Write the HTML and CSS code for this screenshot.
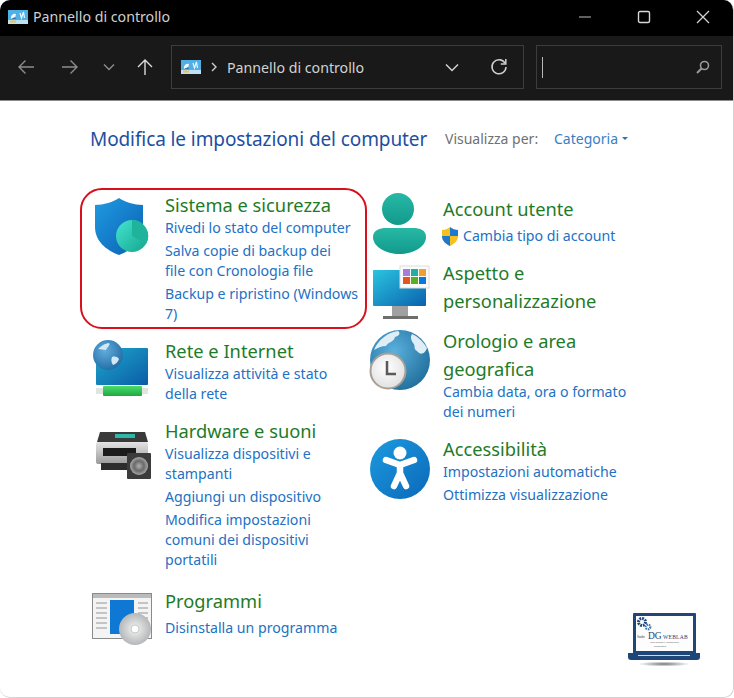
FILE: index.html
```html
<!DOCTYPE html>
<html lang="it">
<head>
<meta charset="utf-8">
<title>Pannello di controllo</title>
<link rel="stylesheet" href="styles.css">
</head>
<body>
<div class="window">
  <header class="titlebar">
    <div class="title-left">
      <svg class="cp-icon" viewBox="0 0 20 14"><rect width="20" height="14" fill="#4fb0e6"/><rect x="0" y="10" width="20" height="4" fill="#bfe0f2"/><path d="M3 9a4 4 0 0 1 5-5l-1 4z" fill="#f4f8fc"/><path d="M3 9h5l-1-2z" fill="#2f78b8"/><path d="M12 3l1.500 5 2-6 1 6" stroke="#eef7fc" fill="none" stroke-width="1.200"/><rect x="2" y="10.500" width="6" height="2" fill="#e8c458"/></svg>
      <span class="title-text">Pannello di controllo</span>
    </div>
    <div class="win-btns">
      <svg class="win-btn" viewBox="0 0 14 14"><path d="M1 7h12" stroke="#bdbdbd" stroke-width="1.2"/></svg>
      <svg class="win-btn" viewBox="0 0 14 14"><rect x="1.500" y="1.500" width="11" height="11" rx="1.500" fill="none" stroke="#d6d6d6" stroke-width="1.400"/></svg>
      <svg class="win-btn" viewBox="0 0 14 14"><path d="M1 1l12 12M13 1L1 13" stroke="#d6d6d6" stroke-width="1.2"/></svg>
    </div>
  </header>
  <nav class="toolbar">
    <div class="nav-btns">
      <svg class="nav-icon" viewBox="0 0 18 16"><path d="M17 8H2M8.500 1.500L2 8l6.500 6.500" fill="none" stroke="#8d8d8d" stroke-width="1.400"/></svg>
      <svg class="nav-icon" viewBox="0 0 18 16"><path d="M1 8h15M9.500 1.500L16 8l-6.500 6.500" fill="none" stroke="#8d8d8d" stroke-width="1.400"/></svg>
      <svg class="nav-chev" viewBox="0 0 12 8"><path d="M1 1.500l5 5 5-5" fill="none" stroke="#8d8d8d" stroke-width="1.400"/></svg>
      <svg class="nav-icon" viewBox="0 0 18 16"><path d="M9 16V1M2 8l7-7 7 7" fill="none" stroke="#dcdcdc" stroke-width="1.400"/></svg>
    </div>
    <div class="address">
      <svg class="cp-icon" viewBox="0 0 20 14"><rect width="20" height="14" fill="#4fb0e6"/><rect x="0" y="10" width="20" height="4" fill="#bfe0f2"/><path d="M3 9a4 4 0 0 1 5-5l-1 4z" fill="#f4f8fc"/><path d="M3 9h5l-1-2z" fill="#2f78b8"/><path d="M12 3l1.500 5 2-6 1 6" stroke="#eef7fc" fill="none" stroke-width="1.200"/><rect x="2" y="10.500" width="6" height="2" fill="#e8c458"/></svg>
      <svg class="crumb-sep" viewBox="0 0 6 10"><path d="M1 1l4 4-4 4" fill="none" stroke="#cfcfcf" stroke-width="1.400"/></svg>
      <span class="crumb">Pannello di controllo</span>
      <svg class="addr-chev" viewBox="0 0 14 9"><path d="M1 1.500l6 6 6-6" fill="none" stroke="#d4d4d4" stroke-width="1.500"/></svg>
      <svg class="refresh" viewBox="0 0 18 18"><path d="M15 5.200A7 7 0 1 0 16 9" fill="none" stroke="#cfcfcf" stroke-width="1.500"/><path d="M15.800 1v5h-5" fill="none" stroke="#cfcfcf" stroke-width="1.500"/></svg>
    </div>
    <div class="search">
      <span class="caret"></span>
      <svg class="search-icon" viewBox="0 0 14 14"><circle cx="8.500" cy="5.500" r="4" fill="none" stroke="#9a9a9a" stroke-width="1.600"/><path d="M5.500 8.500L1 13" stroke="#9a9a9a" stroke-width="2"/></svg>
    </div>
  </nav>
  <main class="content">
    <div class="head">
      <h1 class="heading">Modifica le impostazioni del computer</h1>
      <div class="view-by">
        <span class="view-label">Visualizza per:</span>
        <span class="view-value">Categoria</span>
        <span class="view-caret"></span>
      </div>
    </div>
    <div class="columns">
      <div class="col col-left">
        <section class="cat cat-marked">
          <svg class="icon" viewBox="0 0 64 64">
            <defs>
              <linearGradient id="sh" x1="0" y1="0" x2="1" y2="1"><stop offset="0" stop-color="#1f9be0"/><stop offset="1" stop-color="#0b5fb4"/></linearGradient>
              <linearGradient id="shc" x1="0" y1="0" x2="1" y2="1"><stop offset="0" stop-color="#45e4d0"/><stop offset="1" stop-color="#14a58c"/></linearGradient>
            </defs>
            <path d="M29 7C35 11 44 14 53 14V36C53 50 42 59 29 64C16 59 5 50 5 36V14C14 14 23 11 29 7Z" fill="url(#sh)"/>
            <circle cx="42" cy="45" r="16" fill="url(#shc)"/>
            <path d="M42 45V29A16 16 0 0 1 56 53Z" fill="#1fb39c"/>
          </svg>
          <div class="body">
            <h2 class="cat-title">Sistema e sicurezza</h2>
            <a class="link">Rivedi lo stato del computer</a>
            <a class="link">Salva copie di backup dei<br>file con Cronologia file</a>
            <a class="link">Backup e ripristino (Windows 7)</a>
          </div>
        </section>
        <section class="cat">
          <svg class="icon" viewBox="0 0 64 64">
            <defs>
              <linearGradient id="scr" x1="0" y1="0" x2="1" y2="1"><stop offset="0" stop-color="#1fa8cc"/><stop offset="1" stop-color="#0a5ca6"/></linearGradient>
              <radialGradient id="glb" cx=".4" cy=".35" r=".8"><stop offset="0" stop-color="#63acdc"/><stop offset="1" stop-color="#15639c"/></radialGradient>
              <linearGradient id="grn" x1="0" y1="0" x2="0" y2="1"><stop offset="0" stop-color="#4cdc68"/><stop offset="1" stop-color="#1ea844"/></linearGradient>
            </defs>
            <rect x="6" y="11" width="52" height="37" rx="1" fill="url(#scr)"/>
            <rect x="6" y="51" width="52" height="6" fill="#dfe6df"/>
            <rect x="13" y="49" width="39" height="10" rx="1" fill="url(#grn)"/>
            <circle cx="18" cy="18" r="15" fill="url(#glb)"/>
            <path d="M8 12c4-4 8-6 11-6 2 2-2 4-3 7-3 0-5-1-8-1zM22 20c3-1 6 0 7 2-1 3-3 5-6 6-2-3-2-5-1-8z" fill="#d4e8f4"/>
          </svg>
          <div class="body">
            <h2 class="cat-title">Rete e Internet</h2>
            <a class="link">Visualizza attività e stato della rete</a>
          </div>
        </section>
        <section class="cat">
          <svg class="icon" viewBox="0 0 64 64">
            <defs>
              <linearGradient id="prn" x1="0" y1="0" x2="0" y2="1"><stop offset="0" stop-color="#e4e4e4"/><stop offset="1" stop-color="#9a9a9a"/></linearGradient>
              <radialGradient id="lens"><stop offset="0" stop-color="#b0b0b0"/><stop offset=".55" stop-color="#6a6a6a"/><stop offset="1" stop-color="#a8a8a8"/></radialGradient>
            </defs>
            <path d="M10 15H55L58 25H7Z" fill="#3a3a3a"/>
            <rect x="25" y="17" width="20" height="4" fill="#2cb8a8"/>
            <rect x="6" y="25" width="52" height="22" rx="2" fill="url(#prn)"/>
            <rect x="13" y="31" width="33" height="8" fill="#1c1c1c"/>
            <rect x="11" y="46" width="30" height="7" fill="#2c2c2c"/>
            <rect x="37" y="36" width="24" height="26" rx="1" fill="#3c3c3c"/>
            <circle cx="49" cy="49" r="9" fill="url(#lens)"/>
          </svg>
          <div class="body">
            <h2 class="cat-title">Hardware e suoni</h2>
            <a class="link">Visualizza dispositivi e stampanti</a>
            <a class="link">Aggiungi un dispositivo</a>
            <a class="link">Modifica impostazioni comuni dei dispositivi portatili</a>
          </div>
        </section>
        <section class="cat cat-programs">
          <svg class="icon" viewBox="0 0 64 64">
            <defs>
              <radialGradient id="cd"><stop offset="0" stop-color="#f4f4f4"/><stop offset="1" stop-color="#b4b8b8"/></radialGradient>
            </defs>
            <rect x="2.500" y="6.500" width="59" height="45" fill="#f4f4f4" stroke="#8a8a8a"/>
            <rect x="3" y="7" width="58" height="4" fill="#bbbbbb"/>
            <path d="M6 16h11M6 21h11M6 26h11M6 31h11M6 36h11M6 41h11M48 16h10M48 21h10M48 26h10M48 31h10" stroke="#b4b4b4" stroke-width="1.500"/>
            <rect x="20" y="13" width="24" height="34" fill="#0f78d4"/>
            <circle cx="45" cy="42" r="16" fill="url(#cd)"/>
            <circle cx="45" cy="42" r="4" fill="#fff" stroke="#c8c8c8"/>
          </svg>
          <div class="body">
            <h2 class="cat-title title-loose">Programmi</h2>
            <a class="link">Disinstalla un programma</a>
          </div>
        </section>
      </div>
      <div class="col col-right">
        <section class="cat">
          <svg class="icon" viewBox="0 0 64 64">
            <defs><linearGradient id="pr" x1="0" y1="0" x2="0" y2="1"><stop offset="0" stop-color="#28b8a6"/><stop offset="1" stop-color="#119a8c"/></linearGradient></defs>
            <circle cx="30" cy="17" r="16" fill="url(#pr)"/>
            <path d="M5 45C5 38 12 36 18 36H45C52 36 58 38 58 45C58 55 45 62 31.500 62C18 62 5 55 5 45Z" fill="url(#pr)"/>
          </svg>
          <div class="body">
            <h2 class="cat-title title-loose">Account utente</h2>
            <a class="link link-uac">
              <svg class="uac" viewBox="0 0 18 20"><path d="M9 1C11 3 14 4 17 4V10C17 15 13 18 9 20C5 18 1 15 1 10V4C4 4 7 3 9 1Z" fill="#f4c21e"/><path d="M9 1C11 3 14 4 17 4V10H9ZM9 10V20C5 18 1 15 1 10Z" fill="#1f78d0"/></svg>
              <span>Cambia tipo di account</span>
            </a>
          </div>
        </section>
        <section class="cat">
          <svg class="icon" viewBox="0 0 64 64">
            <defs><linearGradient id="mon" x1="0" y1="0" x2="1" y2="1"><stop offset="0" stop-color="#2bc4e0"/><stop offset="1" stop-color="#0a62ae"/></linearGradient></defs>
            <rect x="5" y="14" width="53" height="36" rx="1" fill="url(#mon)"/>
            <rect x="24" y="50" width="16" height="10" fill="#a0a0a0"/>
            <rect x="15" y="60" width="35" height="3" fill="#6e6e6e"/>
            <rect x="32" y="10" width="29" height="22" fill="#fbfbfb" stroke="#dddddd"/>
            <rect x="35" y="13" width="7" height="7" fill="#a47fd8"/>
            <rect x="43" y="13" width="7" height="7" fill="#20b0a0"/>
            <rect x="51" y="13" width="7" height="7" fill="#f0a030"/>
            <rect x="35" y="21" width="7" height="7" fill="#e8541e"/>
            <rect x="43" y="21" width="7" height="7" fill="#58b020"/>
            <rect x="51" y="21" width="7" height="7" fill="#0a78d8"/>
          </svg>
          <div class="body">
            <h2 class="cat-title title-flush">Aspetto e personalizzazione</h2>
          </div>
        </section>
        <section class="cat cat-tight">
          <svg class="icon" viewBox="0 0 64 64">
            <defs>
              <radialGradient id="gl2" cx=".4" cy=".35" r=".85"><stop offset="0" stop-color="#5ab0dc"/><stop offset="1" stop-color="#14608e"/></radialGradient>
              <radialGradient id="clk" cx=".45" cy=".4" r=".7"><stop offset="0" stop-color="#ffffff"/><stop offset="1" stop-color="#dcdcdc"/></radialGradient>
            </defs>
            <circle cx="32" cy="36" r="30" fill="url(#gl2)"/>
            <path d="M6 26c4-10 14-18 24-19 3 2 1 5-3 6-1 5-7 5-9 9-5 0-8 2-12 4zM44 10c5 2 11 7 15 14-3 8-8 6-10 3-4-2-1-5-4-8-2-3-3-6-1-9z" fill="#dfeef6"/>
            <circle cx="20" cy="47" r="17.500" fill="url(#clk)" stroke="#a89e96" stroke-width="2"/>
            <path d="M19 37V50H28" fill="none" stroke="#5a5a5a" stroke-width="2.500"/>
          </svg>
          <div class="body">
            <h2 class="cat-title">Orologio e area geografica</h2>
            <a class="link">Cambia data, ora o formato dei numeri</a>
          </div>
        </section>
        <section class="cat">
          <svg class="icon" viewBox="0 0 64 64">
            <defs><linearGradient id="acc" x1="0" y1="0" x2="1" y2="1"><stop offset="0" stop-color="#1c9ae0"/><stop offset="1" stop-color="#0b68b8"/></linearGradient></defs>
            <circle cx="32" cy="37" r="30" fill="url(#acc)"/>
            <circle cx="32" cy="21" r="6.500" fill="#fff"/>
            <path d="M18 28L32 33L46 28M32 33V43M32 41L26 54M32 41L38 54" fill="none" stroke="#fff" stroke-width="6.500" stroke-linecap="round" stroke-linejoin="round"/>
          </svg>
          <div class="body">
            <h2 class="cat-title">Accessibilità</h2>
            <a class="link">Impostazioni automatiche</a>
            <a class="link">Ottimizza visualizzazione</a>
          </div>
        </section>
      </div>
    </div>
    <svg class="watermark" viewBox="0 0 76 58">
      <defs><radialGradient id="shd"><stop offset="0" stop-color="#777"/><stop offset="1" stop-color="#fff"/></radialGradient></defs>
      <ellipse cx="38" cy="54" rx="26" ry="2.500" fill="url(#shd)"/>
      <rect x="7" y="3" width="63" height="41" rx="1" fill="#1f4678"/>
      <rect x="10" y="6" width="57" height="35" fill="#fdfdfd"/>
      <path d="M2 43H74V47Q74 50 71 50H5Q2 50 2 47Z" fill="#1f4678"/>
      <rect x="12" y="45" width="52" height="1" fill="#cfd8e6"/>
      <circle cx="16" cy="12" r="3.500" fill="none" stroke="#1f4678" stroke-width="3" stroke-dasharray="1.800 .9"/>
      <circle cx="22" cy="17" r="2.300" fill="none" stroke="#3a70b0" stroke-width="2.200" stroke-dasharray="1.300 .8"/>
      <text class="wm-small" x="11" y="28">Studio</text>
      <text class="wm-dg" x="22" y="29">DG</text>
      <text class="wm-web" x="37" y="29">WEBLAB</text>
      <text class="wm-tiny" x="24" y="33">Web design e consulenza</text>
      <text class="wm-tiny" x="28" y="37">informatica</text>
    </svg>
  </main>
</div>
</body>
</html>
```

FILE: styles.css
```css
* { box-sizing: border-box; }
html, body { margin: 0; padding: 0; background: #fff; }
body { width: 734px; height: 698px; overflow: hidden; font-family: "Noto Sans", sans-serif; }
.window { position: relative; width: 734px; height: 698px; border-radius: 10px; overflow: hidden; border-right: 1px solid #d4d4d4; border-bottom: 1px solid #d4d4d4; display: flex; flex-direction: column; background: #fff; }
.titlebar { height: 36px; flex: none; background: #000; display: flex; align-items: center; justify-content: space-between; padding-left: 8px; }
.title-left { display: flex; align-items: center; gap: 5px; margin-top: -3px; }
.cp-icon { width: 20px; height: 14px; flex: none; }
.title-text { color: #cfcfcf; font-size: 14.2px; }
.win-btns { display: flex; align-items: center; gap: 45px; padding-right: 23px; margin-top: -3px; }
.win-btn { width: 14px; height: 14px; display: block; }
.toolbar { height: 65px; flex: none; background: #191919; border-bottom: 1px solid #8c8c8c; display: flex; align-items: center; padding: 0 12px 2px 17px; }
.nav-btns { display: flex; align-items: center; width: 154px; flex: none; }
.nav-icon { width: 18px; height: 16px; flex: none; }
.nav-icon:nth-child(2) { margin-left: 26px; }
.nav-icon:nth-child(4) { margin-left: 21px; }
.nav-chev { width: 12px; height: 8px; margin-left: 24px; flex: none; }
.address { width: 353px; height: 44px; flex: none; border: 1px solid #3d3d3d; display: flex; align-items: center; padding: 0 15px 0 9px; }
.crumb-sep { width: 6px; height: 10px; margin-left: 10px; flex: none; }
.crumb { color: #d2d2d2; font-size: 14.2px; margin-left: 10px; flex: 1; }
.addr-chev { width: 14px; height: 9px; margin-right: 31px; flex: none; }
.refresh { width: 18px; height: 18px; flex: none; }
.search { width: 186px; height: 44px; margin-left: 12px; flex: none; border: 1px solid #3d3d3d; display: flex; align-items: center; justify-content: space-between; padding: 0 11px 0 5px; }
.caret { display: block; width: 1px; height: 21px; background: #b8b8b8; }
.search-icon { width: 14px; height: 14px; }
.content { position: relative; flex: 1; padding: 24px 0 0 90px; }
.head { display: flex; align-items: center; height: 28px; }
.heading { margin: 0; width: 355px; font-size: 19px; letter-spacing: -0.1px; line-height: 28px; font-weight: 400; color: #1d4f9f; white-space: nowrap; }
.view-by { display: flex; align-items: center; font-size: 14px; margin-top: -2px; }
.view-label { color: #707070; width: 109px; }
.view-value { color: #3a7dc6; }
.view-caret { width: 0; height: 0; margin-left: 4px; border: 3.500px solid transparent; border-top-color: #3a6ea8; border-bottom: 0; }
.columns { display: flex; margin-top: 38px; }
.col { flex: none; display: flex; flex-direction: column; gap: 13px; }
.col-left { width: 278px; }
.col-right { width: 265px; padding-top: 4px; }
.cat { position: relative; display: flex; }
.cat-marked::after { content: ""; box-sizing: border-box; position: absolute; left: -10px; top: -3px; width: 287px; height: 141px; border: 2px solid #d9101c; border-radius: 22px; }
.cat-programs { margin-top: 4px; }
.cat-tight { margin-top: -1px; }
.icon { width: 64px; height: 64px; flex: none; overflow: visible; margin: 0 11px -40px 0; }
.col-right .icon { margin-top: -3px; }
.body { width: 195px; display: flex; flex-direction: column; }
.cat-title { margin: 0 0 -4px; font-size: 18.3px; line-height: 28px; font-weight: 400; color: #1e7b28; }
.title-loose { margin-bottom: 0; }
.title-flush { margin-bottom: 0; }
.link { display: block; margin-top: 3px; font-size: 14.15px; line-height: 20px; color: #2271c4; }
.link-uac { display: flex; align-items: center; margin-left: -2px; white-space: nowrap; }
.uac { width: 18px; height: 20px; flex: none; margin-right: 4px; }
.watermark { position: absolute; right: 31px; bottom: 29px; width: 76px; height: 58px; }
.wm-small { font: 3px "Liberation Serif", serif; fill: #333; }
.wm-dg { font: 9.5px "Liberation Serif", serif; fill: #1f3f70; }
.wm-web { font: 5.5px "Liberation Serif", serif; fill: #1f3f70; letter-spacing: .3px; }
.wm-tiny { font: 2.500px "Liberation Sans", sans-serif; fill: #555; }
```
